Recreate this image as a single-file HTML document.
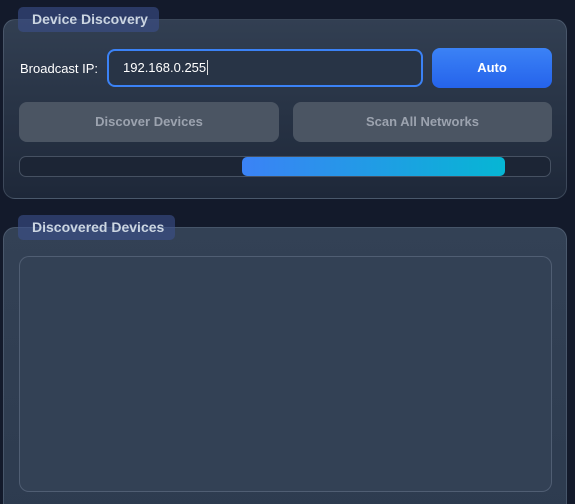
<!DOCTYPE html><html><head><style>
html,body{margin:0;width:575px;height:504px;overflow:hidden}
body{background:#131a2b;font-family:"Liberation Sans",sans-serif;position:relative}
.p{position:absolute;left:3px;width:564px;border:1px solid rgba(148,163,184,.25);border-radius:12px;box-sizing:border-box}
.t{position:absolute;background:rgba(60,80,140,.6);color:#cbd5e1;font-weight:bold;font-size:14px;border-radius:5px;padding:0 14px;line-height:25px;white-space:nowrap;height:25px}
.b{position:absolute;border-radius:8px;font-weight:bold;font-size:13px;text-align:center}
</style></head><body>
<div class="p" style="top:19px;height:180px;background:linear-gradient(180deg,#323f52,#1e2839)"></div>
<div class="t" style="left:18px;top:7px;width:113px">Device Discovery</div>
<div style="position:absolute;left:20px;top:61px;color:#fff;font-size:13px">Broadcast IP:</div>
<div style="position:absolute;left:107px;top:49px;width:316px;height:38px;box-sizing:border-box;border:2px solid #3b82f6;border-radius:8px;background:#283446;color:#fff;font-size:13px;line-height:34px;padding-left:14px">192.168.0.255<span style="border-left:1px solid #ddd;margin-left:1px"></span></div>
<div class="b" style="left:432px;top:48px;width:120px;height:40px;line-height:40px;background:linear-gradient(180deg,#3b82f6,#2563eb);color:#fff">Auto</div>
<div class="b" style="left:19px;top:102px;width:260px;height:40px;line-height:40px;background:#4b5563;color:#9ca3af">Discover Devices</div>
<div class="b" style="left:293px;top:102px;width:259px;height:40px;line-height:40px;background:#4b5563;color:#9ca3af">Scan All Networks</div>
<div style="position:absolute;left:19px;top:156px;width:532px;height:21px;box-sizing:border-box;border:1px solid rgba(148,163,184,.35);border-radius:7px;background:#1c2535"></div>
<div style="position:absolute;left:242px;top:157px;width:263px;height:19px;border-radius:5px;background:linear-gradient(90deg,#3b82f6,#06b6d4)"></div>
<div class="p" style="top:227px;height:290px;background:linear-gradient(180deg,#334155,#2d3b4f)"></div>
<div class="t" style="left:18px;top:215px;width:129px">Discovered Devices</div>
<div style="position:absolute;left:19px;top:256px;width:533px;height:236px;box-sizing:border-box;border:1px solid rgba(148,163,184,.3);border-radius:10px;background:#334155"></div>
</body></html>
